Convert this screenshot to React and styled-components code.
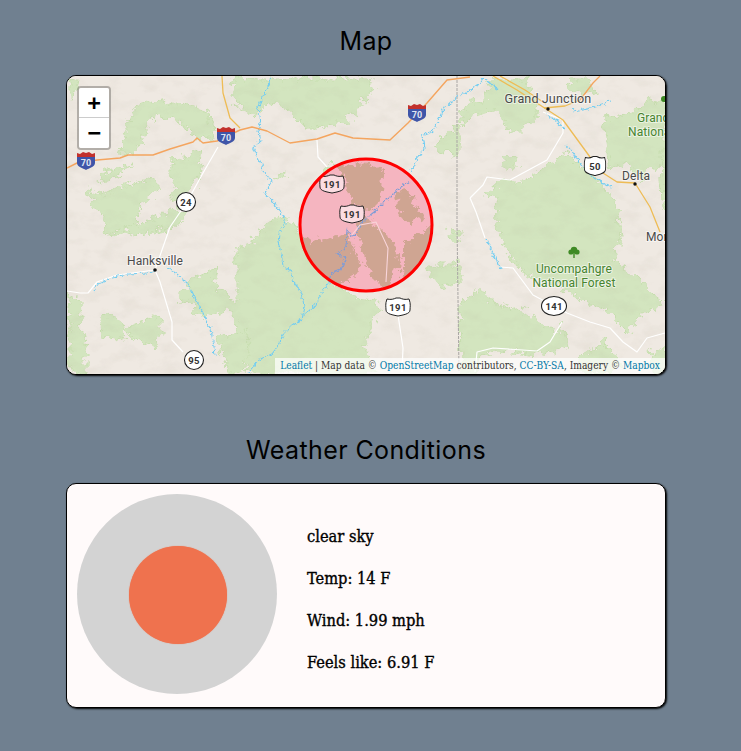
import React from "react";
import styled, { createGlobalStyle } from "styled-components";

const Global = createGlobalStyle`
  html, body { margin: 0; padding: 0; background: #708090; }
`;

const Page = styled.main`
  width: 732px;
  height: 751px;
  overflow: hidden;
  display: flex;
  flex-direction: column;
  align-items: center;
  padding-top: 27px;
  box-sizing: border-box;
`;

const Title = styled.h2`
  margin: 0 0 ${(p) => p.$gap}px;
  height: 28px;
  font: 400 25px/28px "Inter", "Noto Sans", sans-serif;
  letter-spacing: 0.4px;
  color: #000;
`;

const Card = styled.section`
  width: 600px;
  box-sizing: border-box;
  border: 1px solid #000;
  border-radius: 10px;
  box-shadow: 1px 1px 2px #000;
  overflow: hidden;
  position: relative;
`;

const MapCard = styled(Card)`
  height: 300px;
  margin-bottom: 61px;
  background: #efe9e2;
`;

const MapSvg = styled.svg`
  display: block;
  width: 598px;
  height: 298px;
`;

const ZoomControl = styled.div`
  position: absolute;
  left: 10px;
  top: 10px;
  width: 30px;
  border: 2px solid rgba(0, 0, 0, 0.25);
  border-radius: 4px;
  background-clip: padding-box;
  display: flex;
  flex-direction: column;
`;

const ZoomButton = styled.div`
  height: 30px;
  box-sizing: border-box;
  background: #fff;
  display: flex;
  align-items: center;
  justify-content: center;
  font: 700 22px/30px "DejaVu Sans Mono", "Liberation Mono", monospace;
  color: #000;
  border-bottom: ${(p) => (p.$last ? "none" : "1px solid #ccc")};
  border-radius: ${(p) => (p.$last ? "0 0 2px 2px" : "2px 2px 0 0")};
`;

const Attribution = styled.div`
  position: absolute;
  right: 0;
  bottom: 0;
  padding: 0 5px;
  height: 16px;
  background: rgba(255, 255, 255, 0.7);
  font: 400 10.15px/16px "DejaVu Serif Condensed", "DejaVu Serif", serif;
  color: #333;
  white-space: nowrap;
`;

const AttrLink = styled.span`
  color: #0078a8;
`;

const WeatherCard = styled(Card)`
  height: 225px;
  background: #fffafa;
  display: flex;
  align-items: flex-start;
  padding: 10px 0 0 10px;
  gap: 30px;
`;

const Dial = styled.div`
  width: 200px;
  height: 200px;
  border-radius: 50%;
  background: #d3d3d3;
  display: flex;
  align-items: center;
  justify-content: center;
  flex: none;
`;

const Sun = styled.div`
  width: 98px;
  height: 98px;
  border-radius: 50%;
  background: #ef724e;
  box-shadow: 0 0 1px #ef724e;
  margin: 2px 0 0 1px;
`;

const Facts = styled.div`
  display: flex;
  flex-direction: column;
  gap: 21px;
  margin-top: 32px;
`;

const Fact = styled.p`
  margin: 0;
  height: 21px;
  font: 400 16.3px/21px "DejaVu Serif Condensed", "DejaVu Serif", serif;
  -webkit-text-stroke: 0.35px #000;
  color: #000;
`;

const pts = (a) => a.map((p) => p.join(",")).join(" ");

const greens = [
  [[117,150],[122,128],[130,106],[141,101],[152,103],[158,96],[172,101],[190,103],[206,108],[211,126],[208,135],[196,136],[184,124],[170,116],[155,113],[146,120],[141,136],[130,150]],
  [[229,76],[234,103],[250,112],[262,101],[276,100],[290,112],[302,124],[312,124],[345,121],[356,106],[366,92],[372,76]],
  [[168,160],[186,155],[196,147],[200,160],[195,178],[180,197],[170,197],[174,180],[168,172]],
  [[97,172],[115,165],[128,162],[116,172],[100,178]],
  [[84,186],[100,192],[112,186],[130,180],[150,176],[155,188],[138,204],[130,226],[105,232],[100,214],[92,202]],
  [[170,206],[184,210],[170,226],[130,232],[120,226],[150,216]],
  [[67,76],[76,76],[72,92],[67,96]],
  [[322,168],[330,162],[345,166],[345,180],[326,172]],
  [[177,300],[190,276],[205,270],[215,262],[212,282],[225,292],[233,305],[233,245],[250,240],[262,222],[275,212],[288,220],[300,240],[330,280],[352,294],[372,296],[378,306],[366,330],[362,345],[372,372],[247,372],[232,320],[226,305],[212,315],[195,312],[188,302]],
  [[67,292],[78,298],[80,330],[84,345],[84,372],[67,372]],
  [[97,318],[105,310],[118,320],[122,336],[108,334],[98,335]],
  [[122,325],[150,314],[160,318],[160,332],[150,344],[130,336]],
  [[215,335],[245,328],[246,350],[240,372],[225,372]],
  [[424,270],[428,262],[440,262],[457,262],[457,278],[438,286]],
  [[450,225],[457,228],[457,240],[445,236]],
  [[470,290],[478,284],[490,300],[510,305],[528,312],[538,325],[556,330],[560,320],[564,345],[537,352],[495,348],[477,352],[474,372],[459,372],[458,300]],
  [[458,106],[470,98],[480,100],[490,77],[525,77],[535,115],[520,128],[505,128],[493,106],[470,112],[458,124]],
  [[432,145],[452,125],[456,126],[456,155],[432,145]],
  [[485,190],[500,178],[520,178],[565,150],[590,175],[600,180],[615,200],[618,235],[610,260],[620,262],[650,290],[662,300],[640,310],[625,330],[600,305],[575,295],[560,285],[520,270],[510,255],[500,240],[494,225],[493,195]],
  [[600,116],[625,110],[650,98],[664,104],[664,168],[650,165],[640,180],[625,160],[606,168],[603,140]],
  [[575,355],[600,340],[610,350],[620,364],[595,372],[578,370]],
  [[648,350],[664,345],[664,372],[650,372]],
  [[562,84],[572,76],[590,76],[592,90],[578,92]],
  [[658,150],[666,150],[666,210],[660,200]],
  [[501,155],[515,154],[515,165],[501,165]],
  [[273,172],[283,168],[282,173],[274,177]],
];

const tan = [
  [[330,158],[345,164],[362,158],[380,166],[379,196],[370,205],[352,206],[345,190],[342,176]],
  [[296,240],[322,236],[346,230],[350,248],[362,262],[336,284],[322,294],[298,270]],
  [[362,212],[374,226],[392,240],[398,262],[386,292],[372,278],[360,250],[352,228]],
  [[400,238],[416,232],[434,222],[436,262],[410,290],[400,270]],
  [[398,186],[410,196],[420,215],[408,222],[392,204]],
];

const rivers = [
  [[270,76],[263,93],[257,107],[259,122],[257,130],[259,140],[252,145],[256,155],[260,163],[264,172],[270,180],[263,193],[272,200],[277,207],[282,215],[284,223],[278,232],[277,240],[280,252],[282,265],[290,270],[293,282],[300,292],[303,305],[300,318],[290,325],[283,332],[276,345],[270,353],[258,358],[247,372]],
  [[327,282],[322,290],[316,300],[313,305],[304,312],[300,318]],
  [[92,290],[97,282],[112,276],[127,273],[145,272],[153,270]],
  [[165,266],[172,270],[182,278],[187,283],[194,298],[203,315],[210,328],[212,340],[214,354]],
  [[410,170],[416,158],[423,147],[421,134],[432,130],[443,107],[457,95],[468,90],[477,84],[482,77],[497,88]],
  [[408,180],[392,192],[377,207],[368,214],[360,222],[352,236],[346,228],[345,246],[336,252],[344,258],[340,268],[330,272],[327,282]],
  [[546,113],[555,120],[563,127]],
  [[565,143],[572,152],[580,163],[592,176],[610,186]],
  [[485,238],[490,250],[497,260],[500,268]],
  [[610,100],[590,106],[572,110]],
];

const whites = [
  [[218,147],[203,173],[187,202],[170,227],[155,270]],
  [[155,270],[160,282],[172,322],[172,340],[183,352]],
  [[155,270],[117,275],[97,282],[88,293],[80,293],[67,291]],
  [[398,315],[403,348],[402,372]],
  [[317,140],[318,157],[327,167]],
  [[500,267],[513,268],[533,295],[567,313],[590,322],[610,328],[623,342],[637,352],[647,338],[665,333]],
  [[562,322],[550,342],[537,351],[493,348],[477,352],[475,372]],
  [[470,198],[483,185],[487,177],[510,180],[547,160],[563,133]],
  [[470,198],[476,212],[485,238]],
  [[543,112],[563,120],[563,133]],
];

const interstate = [[67,168],[77,163],[97,160],[120,158],[128,155],[153,155],[170,149],[193,142],[197,138],[203,143],[217,141],[240,130],[252,127],[267,131],[290,143],[317,139],[335,133],[353,138],[390,140],[408,123],[427,103],[447,80],[470,77]];
const yellows = [
  [[222,76],[223,93],[230,118],[240,128]],
  [[493,76],[517,90],[543,107],[563,120],[590,157],[603,173],[617,182],[635,183],[650,207],[660,232]],
  [[500,76],[525,90],[546,104]],
  [[544,108],[565,106],[580,100]],
];
const oranges = [[[580,100],[593,83],[600,76]]];

const InterShield = ({ x, y }) => (
  <g transform={`translate(${x} ${y})`}>
    <path d="M-9 -4 L9 -4 L9 2 C9 6 3 7 0 9 C-3 7 -9 6 -9 2 Z" fill="#3f55a8" />
    <path d="M-9 -4 L-9 -8 L-6 -7 L-3 -9 L0 -8 L3 -9 L6 -7 L9 -8 L9 -4 Z" fill="#c2312c" />
    <text x="0" y="5" textAnchor="middle" fontFamily="Roboto, sans-serif" fontWeight="700" fontSize="9" fill="#dfe4f2">70</text>
  </g>
);

const UsShield = ({ x, y, label, pink, compact }) => (
  <g transform={`translate(${x} ${y})`}>
    <path
      transform={compact ? "scale(0.88 1.05)" : undefined}
      d="M-11 -8 C-7 -7 -4 -8 -2 -9 L2 -9 C4 -8 7 -7 11 -8 C13 -3 12 0 12 3 C12 7 5 8 0 9 C-5 8 -12 7 -12 3 C-12 0 -13 -3 -11 -8 Z"
      fill={pink ? "#fbdde2" : "#fff"}
      stroke="#222"
      strokeWidth="1"
    />
    <text x="0" y="4" textAnchor="middle" fontFamily="Roboto, sans-serif" fontWeight="700" fontSize="9.5" letterSpacing="0.4" fill="#333">{label}</text>
  </g>
);

const RoundShield = ({ x, y, label, rx = 9.5 }) => (
  <g transform={`translate(${x} ${y})`}>
    <ellipse rx={rx} ry="9.5" fill="#fff" stroke="#222" strokeWidth="1.1" />
    <text x="0" y="3.5" textAnchor="middle" fontFamily="Roboto, sans-serif" fontWeight="700" fontSize="9.5" letterSpacing="0.3" fill="#333">{label}</text>
  </g>
);

const Place = ({ x, y, children, green, anchor = "middle", size = 12 }) => (
  <text x={x} y={y} textAnchor={anchor} fontFamily="Roboto, sans-serif" fontSize={size} letterSpacing="0.1" fill={green ? "#47842f" : "#4a4a4a"} stroke="rgba(255,255,255,.55)" strokeWidth="2" paintOrder="stroke">{children}</text>
);

const MapArt = () => (
  <MapSvg viewBox="67 76 598 298" aria-label="Map">
    <defs>
      <clipPath id="zone"><circle cx="366" cy="225" r="66" /></clipPath>
      <filter id="terrain" x="0" y="0" width="100%" height="100%">
        <feTurbulence type="fractalNoise" baseFrequency="0.05 0.08" numOctaves="4" seed="7" />
        <feColorMatrix values="0 0 0 0 0.42  0 0 0 0 0.38  0 0 0 0 0.28  1.6 0 0 0 -0.72" />
      </filter>
      <filter id="rough" x="-5%" y="-5%" width="110%" height="110%">
        <feTurbulence type="turbulence" baseFrequency="0.09" numOctaves="3" seed="4" result="n" />
        <feDisplacementMap in="SourceGraphic" in2="n" scale="13" xChannelSelector="R" yChannelSelector="G" />
      </filter>
      <filter id="wiggle" x="-5%" y="-5%" width="110%" height="110%">
        <feTurbulence type="turbulence" baseFrequency="0.18" numOctaves="2" seed="11" result="n" />
        <feDisplacementMap in="SourceGraphic" in2="n" scale="5" xChannelSelector="R" yChannelSelector="G" />
      </filter>
    </defs>
    <rect x="67" y="76" width="600" height="300" fill="#efe9e2" />
    <g filter="url(#rough)">
      {greens.map((g, i) => (
        <polygon key={i} points={pts(g)} fill="#d3e5bf" stroke="#c8dfb0" strokeWidth="1" />
      ))}
    </g>
    <rect x="67" y="76" width="600" height="300" filter="url(#terrain)" opacity="0.14" />
    <polyline points="457,76 457,225 459,372" fill="none" stroke="#a9a6a4" strokeWidth="1" strokeDasharray="3 1" />
    <g>
      {whites.map((w, i) => (
        <polyline key={i} points={pts(w)} fill="none" stroke="#fff" strokeWidth="1.2" strokeLinejoin="round" />
      ))}
    </g>
    <g filter="url(#wiggle)">
      {rivers.map((r, i) => (
        <polyline key={i} points={pts(r)} fill="none" stroke="#72cdf2" strokeWidth="1.1" strokeLinejoin="round" />
      ))}
    </g>
    {yellows.map((r, i) => (
      <polyline key={i} points={pts(r)} fill="none" stroke="#eebc55" strokeWidth="1.3" strokeLinejoin="round" />
    ))}
    {oranges.map((r, i) => (
      <polyline key={i} points={pts(r)} fill="none" stroke="#f4a55f" strokeWidth="1.3" />
    ))}
    <polyline points={pts(interstate)} fill="none" stroke="#f4a55f" strokeWidth="1.4" strokeLinejoin="round" />

    <InterShield x={86} y={161} />
    <InterShield x={226} y={136} />
    <InterShield x={417} y={113} />
    <RoundShield x={186} y={202} label="24" />
    <RoundShield x={194} y={360} label="95" />
    <RoundShield x={554} y={306} label="141" rx="12.5" />
    <UsShield x={398} y={307} label="191" />
    <UsShield x={595} y={166} label="50" compact />

    <Place x={155} y={265}>Hanksville</Place>
    <circle cx="155" cy="270" r="1.8" fill="#111" />
    <Place x={548} y={103} size={12.6}>Grand Junction</Place>
    <circle cx="548" cy="109" r="1.7" fill="#111" />
    <Place x={636} y={180}>Delta</Place>
    <circle cx="635" cy="184" r="1.7" fill="#111" />
    <Place x={646} y={241} anchor="start">Mon</Place>
    <Place x={637} y={122} anchor="start" green>Grand</Place>
    <Place x={628} y={136} anchor="start" green>National</Place>
    <Place x={574} y={273} green>Uncompahgre</Place>
    <Place x={574} y={287} green>National Forest</Place>
    <g fill="#3f8a25">
      <circle cx="574" cy="250" r="3.2" />
      <circle cx="571" cy="252" r="2.6" />
      <circle cx="577" cy="252" r="2.6" />
      <rect x="573.3" y="252" width="1.4" height="6" />
    </g>
    <circle cx="664" cy="99" r="3" fill="#3f8a25" />

    <g clipPath="url(#zone)">
      <circle cx="366" cy="225" r="66" fill="#f5b5c0" />
      <g filter="url(#rough)">
        {tan.map((t, i) => (
          <polygon key={i} points={pts(t)} fill="#cfa592" />
        ))}
      </g>
      <g filter="url(#wiggle)">
        <polyline points={pts(rivers[5])} fill="none" stroke="#7f9cd6" strokeWidth="1.1" />
      </g>
      <polyline points="352,235 360,225 376,222 388,248 386,282" fill="none" stroke="#f9d5da" strokeWidth="1.1" />
    </g>
    <UsShield x={332} y={184} label="191" pink />
    <UsShield x={352} y={214} label="191" pink />
    <circle cx="366" cy="225" r="66" fill="none" stroke="#f00" strokeWidth="3" />
  </MapSvg>
);

const facts = ["clear sky", "Temp: 14 F", "Wind: 1.99 mph", "Feels like: 6.91 F"];

export default function App() {
  return (
    <Page>
      <Global />
      <Title $gap={20}>Map</Title>
      <MapCard>
        <MapArt />
        <ZoomControl>
          <ZoomButton>+</ZoomButton>
          <ZoomButton $last>−</ZoomButton>
        </ZoomControl>
        <Attribution>
          <AttrLink>Leaflet</AttrLink> | Map data © <AttrLink>OpenStreetMap</AttrLink> contributors,{" "}
          <AttrLink>CC-BY-SA</AttrLink>, Imagery © <AttrLink>Mapbox</AttrLink>
        </Attribution>
      </MapCard>
      <Title $gap={19}>Weather Conditions</Title>
      <WeatherCard>
        <Dial>
          <Sun />
        </Dial>
        <Facts>
          {facts.map((f) => (
            <Fact key={f}>{f}</Fact>
          ))}
        </Facts>
      </WeatherCard>
    </Page>
  );
}
